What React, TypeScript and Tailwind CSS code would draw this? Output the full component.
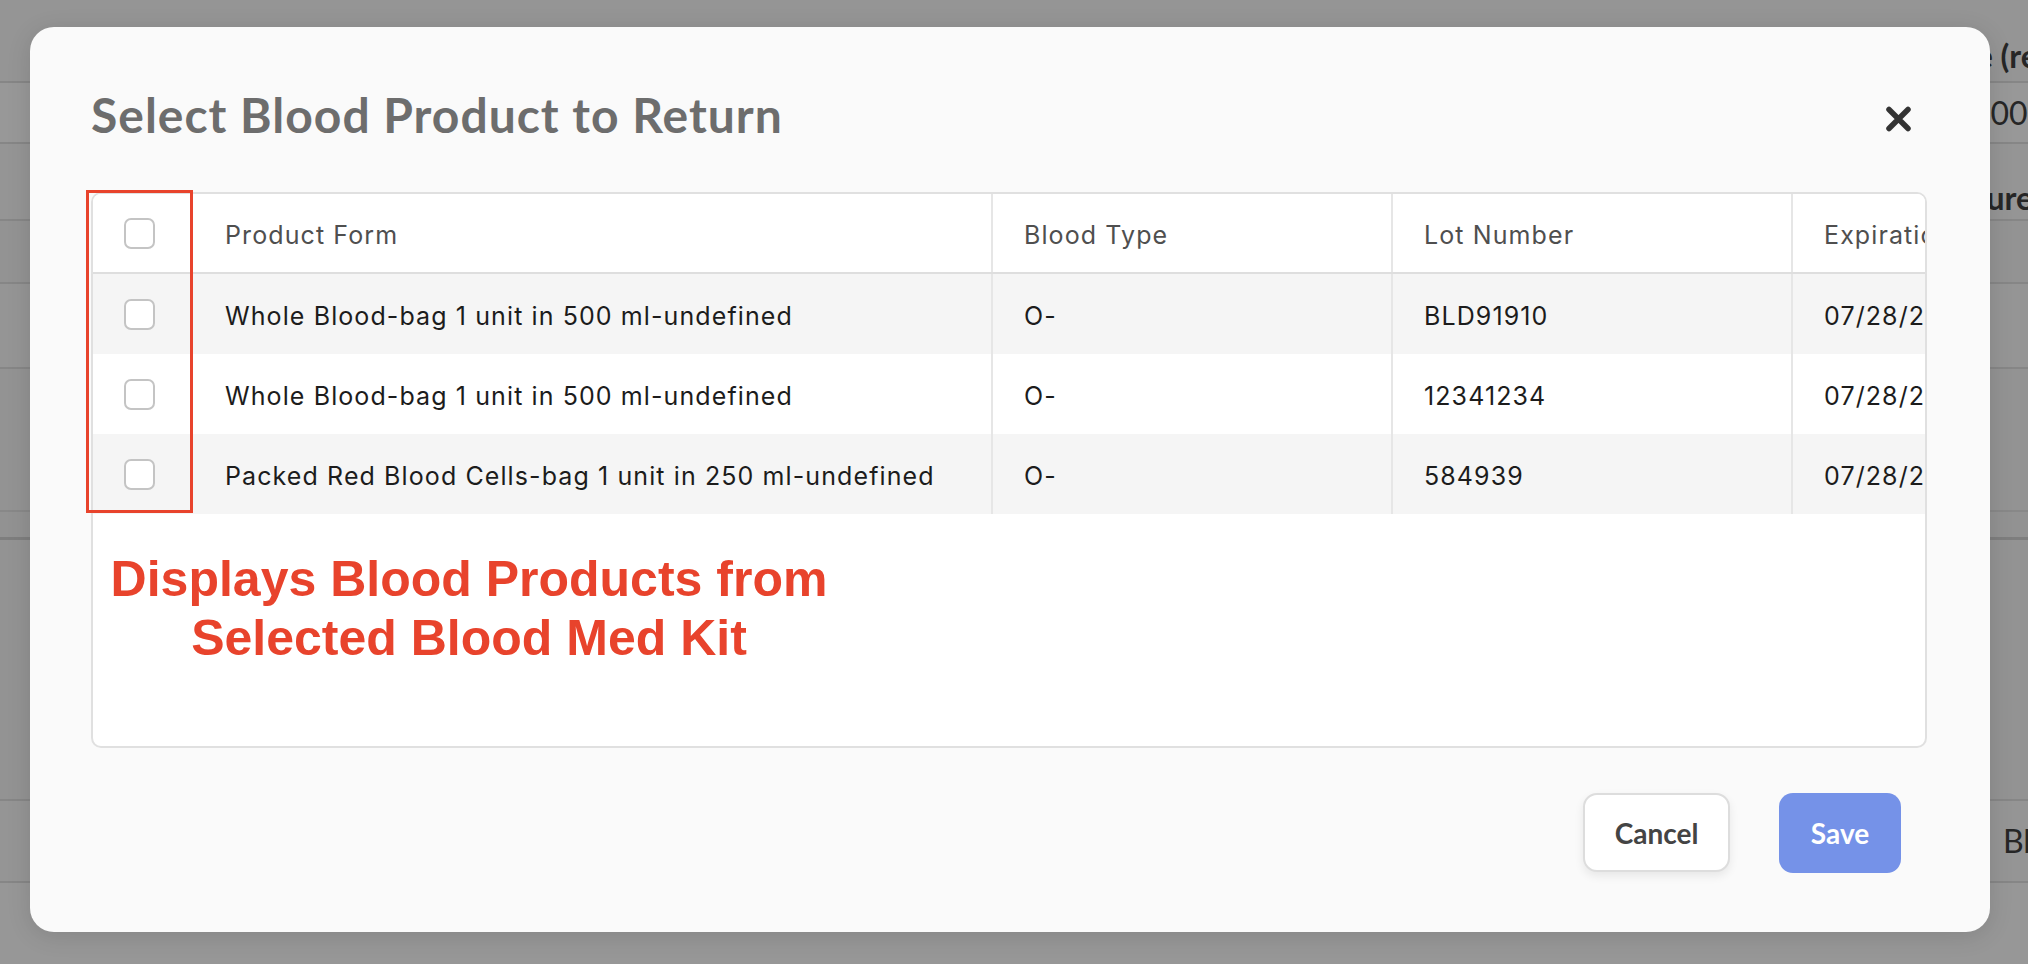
import React from "react";

type Product = { form: string; type: string; lot: string; exp: string };

const products: Product[] = [
  { form: "Whole Blood-bag 1 unit in 500 ml-undefined", type: "O-", lot: "BLD91910", exp: "07/28/2025" },
  { form: "Whole Blood-bag 1 unit in 500 ml-undefined", type: "O-", lot: "12341234", exp: "07/28/2025" },
  { form: "Packed Red Blood Cells-bag 1 unit in 250 ml-undefined", type: "O-", lot: "584939", exp: "07/28/2025" },
];

function Checkbox() {
  return <div className="w-[31px] h-[31px] rounded-[7px] border-2 border-[#c4c4c4] bg-white" />;
}

function CloseIcon() {
  return (
    <svg width="29" height="28" viewBox="0 0 29 28" fill="none">
      <path d="M5 4.5 L24 23.5 M24 4.5 L5 23.5" stroke="#333333" strokeWidth="5.5" strokeLinecap="round" />
    </svg>
  );
}

const cols = "grid grid-cols-[99px_799px_400px_400px_400px]";
const firstCell = "flex items-center pt-[5px] pl-[33px] whitespace-nowrap";
const cell = "flex items-center pt-[5px] pl-[31px] border-l-2 border-[#e6e6e6] whitespace-nowrap";

function PageBehind() {
  // the list page sitting under the dialog backdrop
  return (
    <div className="flex flex-col w-full text-[32px] text-[#262626] [font-family:Lato,sans-serif]">
      <div className="h-[83px] border-b-2 border-[#868686] bg-[#959595] flex">
        <div className="w-[1812px] shrink-0" />
        <div className="pt-[40px] font-bold whitespace-nowrap leading-none">Temperature (recorded)</div>
      </div>
      <div className="h-[61px] border-b-2 border-[#868686] bg-[#989898] flex items-center">
        <div className="w-[1972px] shrink-0" />
        <div className="whitespace-nowrap leading-none">500</div>
      </div>
      <div className="h-[77px] border-b-2 border-[#868686] bg-[#959595] flex">
        <div className="w-[1898px] shrink-0" />
        <div className="pt-[38px] font-bold whitespace-nowrap leading-none">Signature</div>
      </div>
      <div className="h-[63px] border-b-2 border-[#868686] bg-[#939393]" />
      <div className="h-[85px] border-b-2 border-[#868686] bg-[#959595]" />
      <div className="h-[143px] border-b-2 border-[#888888] bg-[#939393]" />
      <div className="h-[28px] border-b-[3px] border-[#7e7e7e] bg-[#929292]" />
      <div className="h-[261px] border-b-2 border-[#868686] bg-[#939393]" />
      <div className="h-[82px] border-b-2 border-[#868686] bg-[#959595] flex items-center">
        <div className="w-[2003px] shrink-0" />
        <div className="whitespace-nowrap leading-none">Blood</div>
      </div>
      <div className="h-[81px] bg-[#979797]" />
    </div>
  );
}

export default function App() {
  return (
    <div className="relative w-[2028px] h-[964px] overflow-hidden bg-[#959595]">
      <PageBehind />

      <div className="absolute left-[30px] top-[27px] w-[1960px] h-[905px] rounded-[24px] bg-[#fafafa] shadow-[0_4px_24px_rgba(0,0,0,0.12)] flex flex-col pl-[61px] pr-[63px] pt-[64px]">
        <div className="flex items-start justify-between pr-[14px]">
          <h2 className="text-[48px] leading-none tracking-[1px] font-bold text-[#6d6d6d] [font-family:Lato,sans-serif]">
            Select Blood Product to Return
          </h2>
          <button className="mt-[14px]">
            <CloseIcon />
          </button>
        </div>

        <div className="relative mt-[53px] h-[556px] rounded-[10px] border-2 border-[#e0e0e0] bg-white">
          <div className="h-full overflow-hidden rounded-[8px] [font-family:Inter,sans-serif] text-[25px] tracking-[1.1px]">
            <div className={`${cols} h-[80px] border-b-2 border-[#dedede] bg-white text-[#4f4f4f]`}>
              <div className="flex items-center pl-[31px]">
                <Checkbox />
              </div>
              <div className={firstCell}>Product Form</div>
              <div className={cell}>Blood Type</div>
              <div className={cell}>Lot Number</div>
              <div className={cell}>Expiration Date</div>
            </div>
            {products.map((p, i) => (
              <div
                key={i}
                className={`${cols} h-[80px] text-[#1c1c1c] ${i % 2 === 0 ? "bg-[#f5f5f5]" : "bg-white"}`}
              >
                <div className="flex items-center pl-[31px]">
                  <Checkbox />
                </div>
                <div className={firstCell}>{p.form}</div>
                <div className={cell}>{p.type}</div>
                <div className={cell}>{p.lot}</div>
                <div className={cell}>{p.exp}</div>
              </div>
            ))}
            <div className="mt-[36px] w-[752px] text-center text-[50px] leading-[59px] tracking-normal font-bold text-[#e8432c] [font-family:'Liberation_Sans',Arial,sans-serif]">
              Displays Blood Products from
              <br />
              Selected Blood Med Kit
            </div>
          </div>
          {/* callout around the selection column */}
          <div className="absolute left-[-7px] top-[-4px] w-[107px] h-[323px] border-[3px] border-[#e8432c]" />
        </div>

        <div className="mt-[45px] flex justify-end gap-[49px] pr-[26px] [font-family:Lato,sans-serif] text-[28px] font-bold">
          <button className="w-[147px] h-[79px] rounded-[14px] border-2 border-[#dddddd] bg-white text-[#444444] shadow-[0_4px_10px_rgba(0,0,0,0.08)]">
            Cancel
          </button>
          <button className="w-[122px] h-[80px] rounded-[14px] bg-[#7592e8] text-white">Save</button>
        </div>
      </div>
    </div>
  );
}
